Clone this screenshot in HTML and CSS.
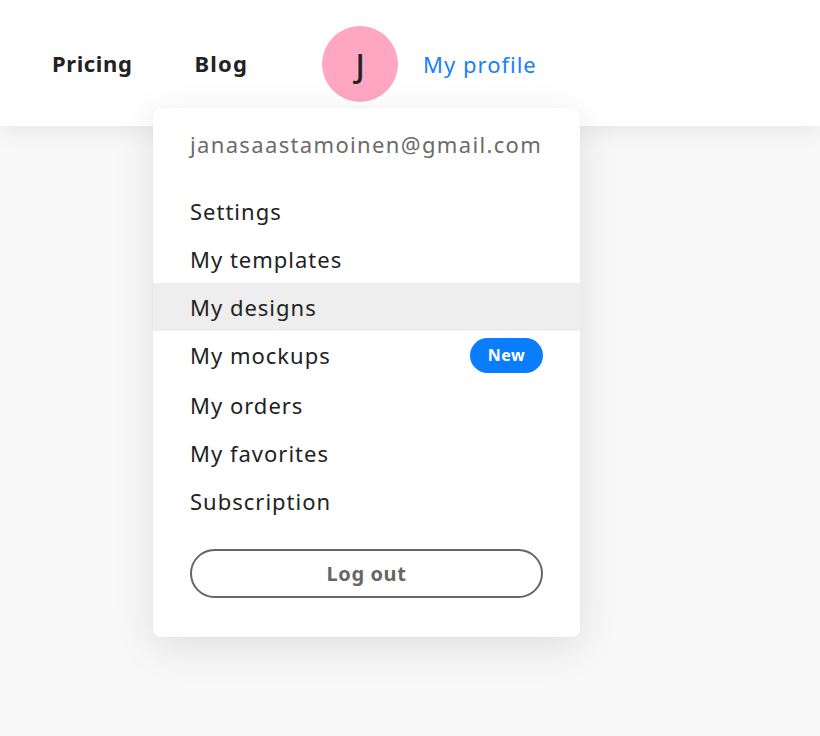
FILE: index.html
```html
<!DOCTYPE html>
<html>
<head>
<meta charset="utf-8">
<link rel="stylesheet" href="styles.css">
</head>
<body>
<header class="topbar">
  <nav class="nav">
    <a class="nav-link">Pricing</a>
    <a class="nav-link">Blog</a>
    <div class="profile">
      <span class="avatar">J</span>
      <a class="profile-link">My profile</a>
    </div>
  </nav>
</header>
<div class="dropdown">
  <div class="email">janasaastamoinen@gmail.com</div>
  <ul class="menu">
    <li class="item">Settings</li>
    <li class="item">My templates</li>
    <li class="item active">My designs</li>
    <li class="item">My mockups <span class="badge">New</span></li>
    <li class="item">My orders</li>
    <li class="item">My favorites</li>
    <li class="item">Subscription</li>
  </ul>
  <button class="logout">Log out</button>
</div>
</body>
</html>
```

FILE: styles.css
```css
* { box-sizing: border-box; }
html, body { margin: 0; padding: 0; }
body {
  background: #f8f8f8;
  font-family: "Noto Sans", "Open Sans", sans-serif;
  width: 820px;
  height: 736px;
  overflow: hidden;
  position: relative;
}
.topbar {
  background: #fff;
  height: 126px;
  box-shadow: 0 2px 24px rgba(0,0,0,0.09);
  position: relative;
  z-index: 1;
}
.nav {
  display: flex;
  align-items: center;
  height: 128px;
  padding: 0 0 0 52px;
}
.nav-link {
  font-size: 22px;
  font-weight: 700;
  color: #222;
  letter-spacing: 0.6px;
  margin-right: 62px;
  position: relative;
  top: -1px;
}
.nav-link + .nav-link { margin-right: 74px; letter-spacing: 1.2px; }
.profile { display: flex; align-items: center; }
.avatar {
  width: 76px;
  height: 76px;
  border-radius: 50%;
  background: #ffa7c2;
  color: #222;
  font-size: 32px;
  font-weight: 500;
  display: flex;
  align-items: center;
  justify-content: center;
}
.profile-link {
  color: #1a80f8;
  font-size: 22px;
  letter-spacing: 1px;
  margin-left: 25px;
}
.dropdown {
  position: absolute;
  left: 153px;
  top: 108px;
  width: 427px;
  height: 529px;
  background: #fff;
  border-radius: 7px;
  box-shadow: 0 10px 40px rgba(0,0,0,0.10), 0 0 1px rgba(0,0,0,0.12);
  z-index: 2;
  padding: 21px 0 0;
}
.email {
  color: #6b6b6b;
  font-size: 22px;
  letter-spacing: 1.35px;
  padding-left: 37px;
  line-height: 30px;
}
.menu {
  list-style: none;
  margin: 28px 0 0;
  padding: 0;
}
.item {
  display: flex;
  align-items: center;
  justify-content: space-between;
  height: 48px;
  padding: 0 37px 0 37px;
  font-size: 22px;
  letter-spacing: 1px;
  color: #222;
}
.item:nth-child(n+5) { position: relative; top: 2px; }
.item.active { background: #eeeeee; }
.badge {
  background: #0a7dff;
  color: #fff;
  font-weight: 700;
  font-size: 16px;
  letter-spacing: 0.6px;
  height: 35px;
  width: 73px;
  border-radius: 18px;
  display: flex;
  align-items: center;
  justify-content: center;
}
.logout {
  display: block;
  margin: 26px 0 0 37px;
  width: 353px;
  height: 49px;
  border: 2px solid #666;
  border-radius: 25px;
  background: #fff;
  color: #666;
  font-family: inherit;
  font-size: 20px;
  font-weight: 700;
  letter-spacing: 0.6px;
}
```
